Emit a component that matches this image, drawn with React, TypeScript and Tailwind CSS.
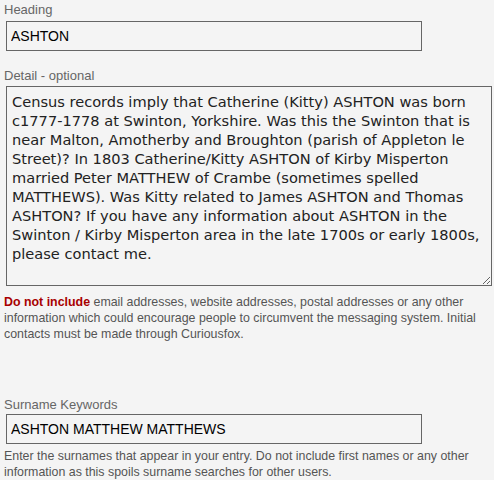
const detail =
  'Census records imply that Catherine (Kitty) ASHTON was born c1777-1778 at Swinton, Yorkshire. Was this the Swinton that is near Malton, Amotherby and Broughton (parish of Appleton le Street)? In 1803 Catherine/Kitty ASHTON of Kirby Misperton married Peter MATTHEW of Crambe (sometimes spelled MATTHEWS). Was Kitty related to James ASHTON and Thomas ASHTON? If you have any information about ASHTON in the Swinton / Kirby Misperton area in the late 1700s or early 1800s, please contact me.';

const Label = ({ children }: { children: React.ReactNode }) => (
  <div className="text-[13px] leading-4 text-[#666]">{children}</div>
);

export default function App() {
  return (
    <div className="min-h-[480px] bg-[#f4f4f4] pl-1 pt-[2px] font-['Liberation_Sans',Arial,sans-serif]">
      <Label>Heading</Label>
      <input
        readOnly
        value="ASHTON"
        className="mt-[3px] ml-[2px] block h-[30px] w-[416px] border border-[#666] bg-[#f4f4f4] px-1 text-[14px] text-black outline-none"
      />

      <div className="mt-[17px]">
        <Label>Detail - optional</Label>
      </div>
      <textarea
        readOnly
        value={detail}
        className="mt-[2px] ml-[2px] block h-[200px] w-[486px] resize border border-[#666] bg-[#f4f4f4] px-[5px] py-[5px] font-['DejaVu_Sans',Verdana,sans-serif] text-[14.6px] leading-[19px] text-[#222] outline-none"
      />

      <p className="mt-2 w-[486px] text-[12.4px] leading-4 text-[#555]">
        <span className="font-bold text-[#a80000]">Do not include</span> email addresses, website
        addresses, postal addresses or any other information which could encourage people to
        circumvent the messaging system. Initial contacts must be made through Curiousfox.
      </p>

      <div className="mt-[55px]">
        <Label>Surname Keywords</Label>
      </div>
      <input
        readOnly
        value="ASHTON MATTHEW MATTHEWS"
        className="mt-[1px] ml-[2px] block h-[30px] w-[416px] border border-[#666] bg-[#f4f4f4] px-1 text-[14px] text-black outline-none"
      />
      <p className="mt-1 w-[486px] text-[12.4px] leading-4 text-[#555]">
        Enter the surnames that appear in your entry. Do not include first names or any other
        information as this spoils surname searches for other users.
      </p>
    </div>
  );
}
